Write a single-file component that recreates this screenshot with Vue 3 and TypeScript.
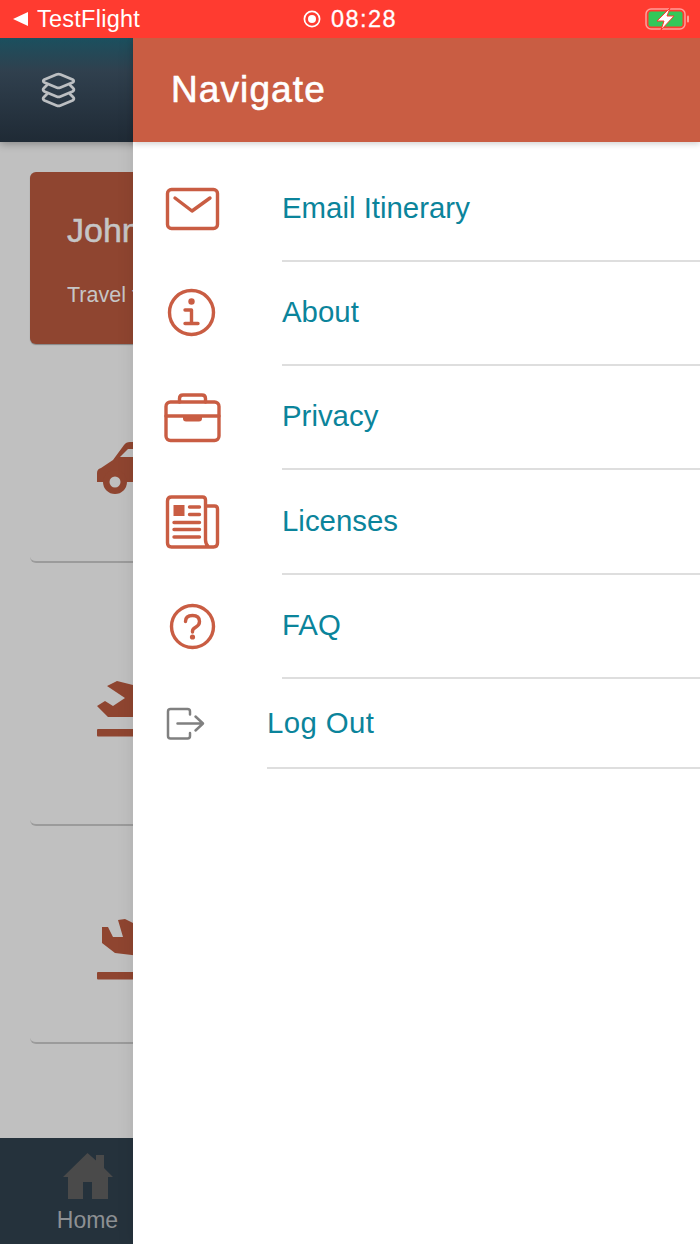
<template>
  <div class="app">
    <!-- status bar -->
    <div class="status">
      <div class="status-left">
        <svg class="back" viewBox="0 0 15 14" width="15" height="14"><path d="M0 7 15 0v14z" fill="#fff" /></svg>
        <span>TestFlight</span>
      </div>
      <div class="status-mid">
        <svg viewBox="0 0 18 18" width="18" height="18">
          <circle cx="9" cy="9" r="7.600" fill="none" stroke="#fff" stroke-width="1.700" />
          <circle cx="9" cy="9" r="4" fill="#fff" />
        </svg>
        <span>08:28</span>
      </div>
      <div class="status-right">
        <svg viewBox="0 0 46 22" width="46" height="22">
          <rect x="1" y="1" width="39" height="20" rx="5" fill="none" stroke="#ff9f99" stroke-width="1.500" />
          <rect x="3.500" y="3.500" width="34" height="15" rx="2.500" fill="#34c759" />
          <rect x="42" y="7.500" width="2" height="7" rx="1" fill="#ff9f99" />
          <path d="M25 0 12 13h7l-3 9 13-14h-7z" fill="#fff" stroke="#ff3b30" stroke-width="1" />
        </svg>
      </div>
    </div>

    <div class="stage">
      <!-- page behind the drawer -->
      <div class="page">
        <div class="page-head">
          <svg class="layers" viewBox="41 72 36 36" width="36" height="36" fill="none" stroke="#bcbfc2" stroke-width="2.800" stroke-linejoin="round" stroke-linecap="round">
            <path d="M56.500 74.500q2-.8 4 0l12 5q2.500 1.500 0 3l-12 5q-2 .8-4 0l-12-5q-2.500-1.500 0-3z" />
            <path d="M47 85l-3 3q-2 2 .5 3.500l12 5q2 .8 4 0l12-5q2.500-1.500 .5-3.500l-3-3" />
            <path d="M47 94l-3 3q-2 2 .5 3.500l12 5q2 .8 4 0l12-5q2.500-1.500 .5-3.500l-3-3" />
          </svg>
        </div>
        <div class="page-body">
          <div class="card red">
            <div class="name">John</div>
            <div class="sub">Travel to</div>
          </div>
          <div class="card plain c1">
            <svg viewBox="97 440 60 56" width="60" height="56">
              <path d="M97 482v-9q0-4 4-5l12-8 11-15q2-3 6-3h27v40H97z" fill="#8f4530" />
              <path d="M120 457l8-8h5v8z" fill="#bfbfbf" />
              <circle cx="115" cy="482" r="12" fill="#8f4530" />
              <circle cx="115" cy="482" r="5.500" fill="#bfbfbf" />
            </svg>
          </div>
          <div class="card plain c2">
            <svg viewBox="97 683 60 56" width="60" height="56">
              <path d="M107 688l10-5 16 4 24 1v31h-49l-11-11 8-5 8 5 12-8z" fill="#8f4530" />
              <rect x="97" y="731" width="60" height="7.500" rx="1" fill="#8f4530" />
            </svg>
          </div>
          <div class="card plain c3">
            <svg viewBox="97 919 60 61" width="60" height="61">
              <path d="M102 927l6 0 5 10 10 0-5-17 7-1 8 4 24 5v30l-42-5-13-10z" fill="#8f4530" />
              <rect x="97" y="972" width="60" height="7.500" rx="1" fill="#8f4530" />
            </svg>
          </div>
        </div>
        <div class="tabs">
          <div class="tab">
            <svg viewBox="63 1153 50 46" width="50" height="46">
              <path d="M87.500 1153 96 1160.500V1155h8v13l9 9h-5v22H92v-17h-9v17H68v-22h-5z" fill="#4a4a4a" />
            </svg>
            <span>Home</span>
          </div>
        </div>
      </div>

      <!-- side drawer -->
      <aside class="drawer">
        <header class="drawer-head">Navigate</header>
        <div class="menu">
          <div v-for="item in items" :key="item.label" class="row" :class="{ small: item.id === 'logout' }">
            <div class="icon">
              <svg v-if="item.id === 'mail'" viewBox="160 177 64 64" width="64" height="64">
                <rect x="167.500" y="189.500" width="50" height="39" rx="4" class="st" />
                <path d="M175 198l17 13 18-13" class="st" />
              </svg>
              <svg v-else-if="item.id === 'info'" viewBox="160 281 64 64" width="64" height="64">
                <circle cx="191.500" cy="312.500" r="22" class="st" />
                <circle cx="191.500" cy="301.500" r="3.200" class="fl" />
                <path d="M185 310h6.500v13.500M185 323.500h13" class="st" />
              </svg>
              <svg v-else-if="item.id === 'brief'" viewBox="160 385 64 64" width="64" height="64">
                <rect x="166" y="402" width="53" height="38.500" rx="4.500" class="st" />
                <path d="M179.500 402v-3.500q0-3.500 3.500-3.500h19q3.500 0 3.500 3.500v3.500M166 416h53" class="st" />
                <path d="M183 416h19v2.500q0 3-3 3h-13q-3 0-3-3z" class="fl" />
              </svg>
              <svg v-else-if="item.id === 'news'" viewBox="160 490 64 64" width="64" height="64">
                <path d="M206 506h8.500q3 0 3 3v34q0 4-4 4h-42q-4 0-4-4v-42q0-4 4-4h31q3 0 3 3v40q0 4 3 7" class="st" />
                <rect x="173.500" y="505" width="11" height="11" class="fl" />
                <path d="M189.500 507h10M189.500 514.500h10M174 522.500h25.500M174 529.500h25.500M174 537h25.500" class="st" />
              </svg>
              <svg v-else-if="item.id === 'faq'" viewBox="160 594 64 64" width="64" height="64">
                <circle cx="192.500" cy="626.500" r="21" class="st" />
                <path d="M185.500 621.500q0-6 7-6t7 6q0 3.500-3.500 5.500t-3.500 4v1" class="st" />
                <circle cx="192.500" cy="637" r="2.600" class="fl" />
              </svg>
              <svg v-else viewBox="160 691 64 64" width="64" height="64" class="gray">
                <path d="M190 714.500v-3q0-2.500-2.500-2.500h-17q-2.500 0-2.500 2.500v24.500q0 2.500 2.500 2.500h17q2.500 0 2.500-2.500v-3" class="thin" />
                <path d="M177.500 723.500h25M195.500 716.500l7.500 7-7.500 7" class="thin" />
              </svg>
            </div>
            <div class="label">{{ item.label }}</div>
          </div>
        </div>
      </aside>
    </div>
  </div>
</template>

<script setup lang="ts">
interface MenuItem {
  id: string
  label: string
}

const items: MenuItem[] = [
  { id: 'mail', label: 'Email Itinerary' },
  { id: 'info', label: 'About' },
  { id: 'brief', label: 'Privacy' },
  { id: 'news', label: 'Licenses' },
  { id: 'faq', label: 'FAQ' },
  { id: 'logout', label: 'Log Out' },
]
</script>

<style>
html,
body {
  margin: 0;
  background: #fff;
}
</style>

<style scoped>
.app {
  width: 700px;
  height: 1244px;
  display: flex;
  flex-direction: column;
  overflow: hidden;
  font-family: "Liberation Sans", Arial, sans-serif;
}

.status {
  height: 38px;
  flex: none;
  background: #ff3b30;
  color: #fff;
  font-size: 23.5px;
  display: grid;
  grid-template-columns: 1fr auto 1fr;
  align-items: center;
}

.status-left {
  display: flex;
  align-items: center;
  padding-left: 13px;
  gap: 9px;
  letter-spacing: 0.25px;
}

.status-mid {
  display: flex;
  align-items: center;
  gap: 10px;
  letter-spacing: 1.4px;
  -webkit-text-stroke: 0.3px #fff;
}

.status-right {
  display: flex;
  justify-content: flex-end;
  padding-right: 9px;
}

.stage {
  flex: 1;
  position: relative;
  min-height: 0;
  overflow: hidden;
}

.page {
  height: 100%;
  display: flex;
  flex-direction: column;
  background: #c0c0c0;
}

.page-head {
  height: 104px;
  flex: none;
  padding-left: 41px;
  display: flex;
  align-items: center;
  background: linear-gradient(180deg, #1b505f 0%, #30404e 32%, #1f2a35 100%);
  box-shadow: 0 2px 8px rgba(0, 0, 0, 0.3);
  position: relative;
}

.page-body {
  flex: 1;
  padding: 30px 0 0 30px;
  display: flex;
  flex-direction: column;
  gap: 31px;
}

.card {
  width: 640px;
  border-radius: 6px;
  box-sizing: border-box;
  flex: none;
}

.red {
  height: 172px;
  padding-left: 37px;
  background: #8f4530;
  color: #c6c6c6;
  box-shadow: 0 1px 1px rgba(0, 0, 0, 0.3);
}

.name {
  font-size: 34px;
  line-height: 38px;
  padding-top: 39px;
  -webkit-text-stroke: 0.5px #c6c6c6;
}

.sub {
  font-size: 21.5px;
  line-height: 26px;
  padding-top: 33px;
}

.plain {
  padding-left: 67px;
  display: flex;
  align-items: center;
  border-bottom: 2px solid #9b9b9b;
}

.c1 {
  height: 188px;
}

.c2 {
  height: 232px;
}

.c3 {
  height: 187px;
}

.tabs {
  height: 106px;
  flex: none;
  display: flex;
  background: #25323c;
}

.tab {
  width: 175px;
  box-sizing: border-box;
  padding-top: 15px;
  display: flex;
  flex-direction: column;
  align-items: center;
  color: #8d9093;
  font-size: 23px;
  gap: 8px;
}

.drawer {
  position: absolute;
  left: 133px;
  top: 0;
  bottom: 0;
  right: 0;
  background: #fff;
  box-shadow: 0 0 16px rgba(0, 0, 0, 0.1);
}

.drawer-head {
  height: 104px;
  box-sizing: border-box;
  padding-left: 38px;
  display: flex;
  align-items: center;
  background: #c95d43;
  color: #fff;
  font-size: 37px;
  letter-spacing: 1.1px;
  -webkit-text-stroke: 0.6px #fff;
  box-shadow: 0 2px 6px rgba(0, 0, 0, 0.18);
}

.menu {
  padding-top: 15.5px;
}

.row {
  height: 104.3px;
  display: flex;
  padding-left: 27px;
}

.row.small {
  height: 90px;
}

.icon {
  width: 64px;
  flex: none;
  display: flex;
  align-items: center;
  padding-bottom: 2px;
}

.label {
  flex: 1;
  margin-left: 58px;
  padding-bottom: 2px;
  display: flex;
  align-items: center;
  border-bottom: 2px solid #dedede;
  color: #0b849b;
  font-size: 29.4px;
}

.small .label {
  margin-left: 43px;
  padding-bottom: 0;
  letter-spacing: 0.4px;
}

.st {
  fill: none;
  stroke: #c95d43;
  stroke-width: 3.400;
  stroke-linecap: round;
  stroke-linejoin: round;
}

.fl {
  fill: #c95d43;
}

.thin {
  fill: none;
  stroke: #808080;
  stroke-width: 2.500;
  stroke-linecap: round;
  stroke-linejoin: round;
}
</style>
